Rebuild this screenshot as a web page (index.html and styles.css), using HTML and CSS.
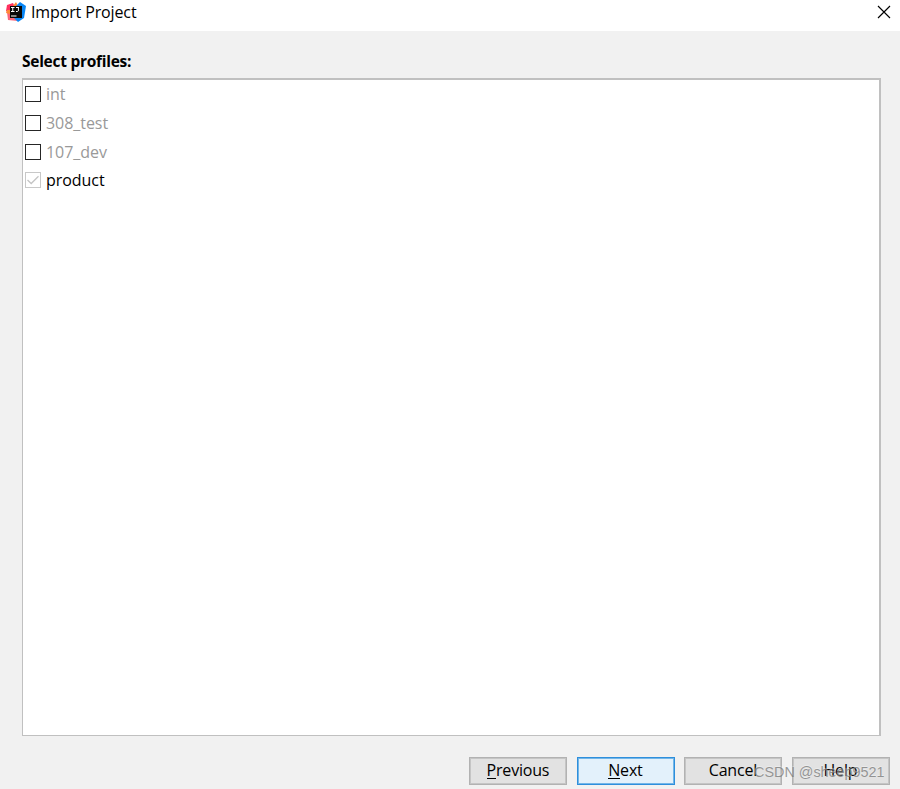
FILE: index.html
```html
<!DOCTYPE html>
<html lang="en">
<head>
<meta charset="utf-8">
<title>Import Project</title>
<link rel="stylesheet" href="styles.css">
</head>
<body>
<div class="dialog">
  <header class="titlebar">
    <svg class="logo" width="20" height="20" viewBox="0 0 20 20">
      <path d="M1 3L7 1 9 5 5 12 0 9z" fill="#ff315f"/>
      <path d="M1 10L5 8 12 19 2 18z" fill="#fb6578"/>
      <path d="M1 8L4 8 4 12 0 11z" fill="#ff8a35"/>
      <path d="M7 4L10 0 12 4z" fill="#ff8a35"/>
      <path d="M10 4L14 0 20 4 18 16 12 20 8 16z" fill="#0785f5"/>
      <path d="M4 4H16V16H4z" fill="#080808"/>
      <path d="M5 5.5H8.5M6.75 5.5V9.5M5 9.5H8.5M10 5.5H13M12.4 5.5V8.8L11.5 9.5H10" fill="none" stroke="#fff" stroke-width="1"/>
      <path d="M5 14H10.5" stroke="#fff" stroke-width="1"/>
    </svg>
    <h1 class="title">Import Project</h1>
    <svg class="close" width="14" height="14" viewBox="0 0 14 14"><path d="M1 1L13 13M13 1L1 13" fill="none" stroke="#000" stroke-width="1.15"/></svg>
  </header>
  <main class="content">
    <h2 class="heading">Select profiles:</h2>
    <div class="profiles">
      <div class="profile"><span class="box"></span><span class="name">int</span></div>
      <div class="profile"><span class="box"></span><span class="name">308_test</span></div>
      <div class="profile"><span class="box"></span><span class="name">107_dev</span></div>
      <div class="profile selected"><span class="box"><svg width="14" height="14" viewBox="0 0 14 14"><path d="M1.5 7L5.2 10.5 12.5 3.2" fill="none" stroke="#c4c4c4" stroke-width="1.3"/></svg></span><span class="name">product</span></div>
    </div>
  </main>
  <footer class="actions">
    <button class="button"><span class="key">P</span>revious</button>
    <button class="button primary"><span class="key">N</span>ext</button>
    <button class="button">Cancel</button>
    <button class="button">Help</button>
  </footer>
  <div class="watermark">CSDN @sheep9521</div>
</div>
</body>
</html>
```
FILE: styles.css
```css
* { box-sizing: border-box; }
body { margin: 0; font-family: "Open Sans", "Noto Sans", sans-serif; font-size: 16px; color: #000; }
.dialog { position: relative; width: 900px; height: 789px; background: #f1f1f1; display: flex; flex-direction: column; overflow: hidden; }
.titlebar { height: 31px; background: #fff; display: flex; align-items: flex-start; padding: 2px 9px 0 6px; }
.logo { flex: none; }
.title { margin: 0 auto 0 5px; font-size: 16px; font-weight: 400; line-height: 20px; letter-spacing: -0.13px; }
.close { margin-top: 3px; }
.content { padding: 20px 19px 0 22px; }
.heading { margin: 0; height: 27px; font-size: 15.5px; font-weight: 700; line-height: 20px; letter-spacing: -0.27px; }
.profiles { height: 658px; background: #fff; border: solid #c0c0c0; border-width: 2px 2px 1px 1px; }
.profile { height: 28.7px; display: flex; align-items: center; padding-left: 2px; gap: 5px; color: #999; }
.box { width: 16px; height: 16px; border: 1px solid #262626; flex: none; }
.box svg { display: block; }
.selected { color: #000; }
.selected .box { border-color: #c8c8c8; }
.name { line-height: 22px; letter-spacing: -0.05px; }
.actions { margin-top: 21px; padding-right: 10.1px; display: flex; justify-content: flex-end; gap: 9.5px; }
.button { width: 98px; height: 28px; padding: 0 1px 2px 0; border: 1px solid #b2b2b2; outline: 1px solid #c5c5c5; outline-offset: -2px; background: #e2e2e2; font: inherit; color: #000; letter-spacing: -0.2px; line-height: 24px; }
.primary { border-color: #2e8fdc; outline-color: #73b6e8; background: #e3f1fb; }
.key { box-shadow: inset 0 -1px #000; display: inline-block; line-height: 18px; }
.watermark { position: absolute; left: 754px; top: 763px; font: 14.4px/18px "Liberation Sans", sans-serif; color: rgba(120, 120, 120, .75); text-shadow: 0 -1px rgba(255, 255, 255, .35); white-space: nowrap; }
```
